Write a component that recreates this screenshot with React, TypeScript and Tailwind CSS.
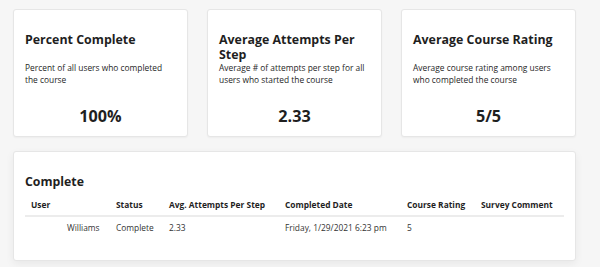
import React from 'react';

interface StatCard {
  title: string;
  description: string;
  value: string;
}

const statCards: StatCard[] = [
  {
    title: 'Percent Complete',
    description: 'Percent of all users who completed the course',
    value: '100%',
  },
  {
    title: 'Average Attempts Per Step',
    description: 'Average # of attempts per step for all users who started the course',
    value: '2.33',
  },
  {
    title: 'Average Course Rating',
    description: 'Average course rating among users who completed the course',
    value: '5/5',
  },
];

const columns = ['User', 'Status', 'Avg. Attempts Per Step', 'Completed Date', 'Course Rating', 'Survey Comment'];

const rows = [
  {
    user: 'Williams',
    status: 'Complete',
    attempts: '2.33',
    completed: 'Friday, 1/29/2021 6:23 pm',
    rating: '5',
    comment: '',
  },
];

const gridCols = 'grid grid-cols-[85px_53px_116px_122px_74px_91px]';

export default function App() {
  return (
    <div
      className="w-[600px] h-[267px] overflow-hidden bg-[#f6f6f6] pl-[13px] pt-[9px] text-[#1f1f1f]"
      style={{ fontFamily: '"Open Sans", "Noto Sans", sans-serif' }}
    >
      {/* Summary cards */}
      <div className="flex gap-[19px]">
        {statCards.map((card) => (
          <div
            key={card.title}
            className="w-[175px] h-[128px] bg-white border border-[#e6e6e6] rounded-[3px] shadow-[0_1px_2px_rgba(0,0,0,0.04)] px-[11px] pt-[22px] flex flex-col"
          >
            <div className="h-[30px] text-[12.4px] leading-[15px] font-bold">{card.title}</div>
            <p className="text-[8.4px] leading-[12px] text-[#262626] pr-[2px]">{card.description}</p>
            <div className="mt-auto mb-[10px] text-center text-[16.2px] leading-[20px] font-bold">{card.value}</div>
          </div>
        ))}
      </div>

      {/* Completed users table */}
      <div className="mt-[14px] w-[563px] h-[110px] bg-white border border-[#e6e6e6] rounded-[3px] shadow-[0_3px_8px_rgba(0,0,0,0.06)] pl-[11px] pr-[11px] pt-[21px]">
        <h2 className="text-[12.3px] leading-[18px] font-bold">Complete</h2>
        <div className="mt-[8px]">
          <div className={`${gridCols} text-[8.4px] leading-[12px] font-bold pb-[4px] border-b-2 border-[#ececec]`}>
            {columns.map((col) => (
              <div key={col} className="px-[6px] whitespace-nowrap">{col}</div>
            ))}
          </div>
          {rows.map((row) => (
            <div key={row.user} className={`${gridCols} text-[8.4px] leading-[12px] text-[#333] pt-[5px]`}>
              <div className="pl-[42px] whitespace-nowrap">{row.user}</div>
              <div className="px-[6px] whitespace-nowrap">{row.status}</div>
              <div className="px-[6px]">{row.attempts}</div>
              <div className="px-[6px] whitespace-nowrap">{row.completed}</div>
              <div className="px-[6px]">{row.rating}</div>
              <div className="px-[6px]">{row.comment}</div>
            </div>
          ))}
        </div>
      </div>
    </div>
  );
}
